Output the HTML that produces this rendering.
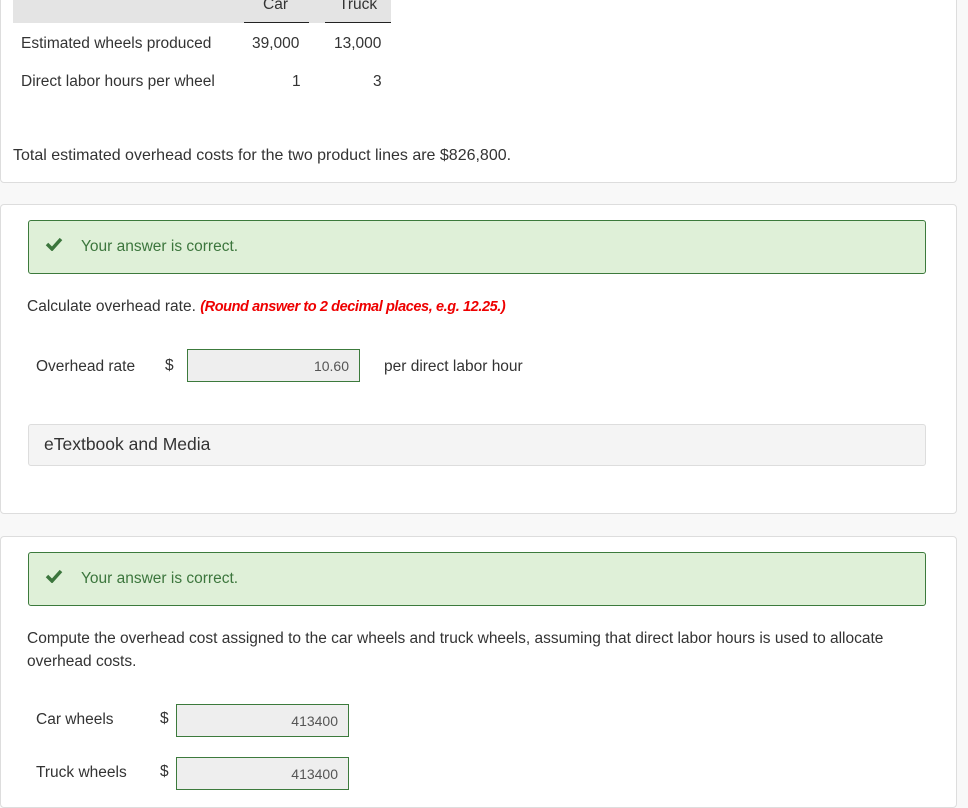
<!DOCTYPE html>
<html><head><style>
body{margin:0;width:968px;height:793px;background:#f8f8f8;position:relative;overflow:hidden;font-family:"Liberation Sans",sans-serif;color:#333;font-size:15.5px}
.a{position:absolute;white-space:nowrap}
.card{position:absolute;left:0;width:955px;background:#fff;border:1px solid #ddd;border-radius:4px}
.ok{position:absolute;left:28px;width:896px;height:52px;background:#dff0d8;border:1px solid #3c7a3c;border-radius:3px}
.ok span{position:absolute;left:52px;top:17px;color:#3c763d;font-size:15.5px}
.ok svg{position:absolute;left:16px;top:16px}
.inp{position:absolute;background:#eee;border:1px solid #3c7a3c;text-align:right;font-size:14px;color:#555;box-sizing:border-box;padding-right:10px}
</style></head><body>
<div class="card" style="top:-5px;height:186px"></div>
<div class="a" style="left:13px;top:0;width:378px;height:23px;background:#e4e4e4"></div>
<div class="a" style="left:244px;top:22px;width:65px;height:1px;background:#222"></div>
<div class="a" style="left:325px;top:22px;width:66px;height:1px;background:#222"></div>
<div class="a" style="left:263px;top:-4px">Car</div>
<div class="a" style="left:339px;top:-4px">Truck</div>
<div class="a" style="left:21px;top:35px">Estimated wheels produced</div>
<div class="a" style="left:252px;top:35px">39,000</div>
<div class="a" style="left:334px;top:35px">13,000</div>
<div class="a" style="left:21px;top:73px">Direct labor hours per wheel</div>
<div class="a" style="left:292px;top:73px">1</div>
<div class="a" style="left:373px;top:73px">3</div>
<div class="a" style="left:13px;top:147px;font-size:16px">Total estimated overhead costs for the two product lines are $826,800.</div>

<div class="card" style="top:204px;height:308px"></div>
<div class="ok" style="top:220px"><svg width="18" height="14" viewBox="0 0 18 14"><path d="M2 7l5 5L16 2" fill="none" stroke="#3c763d" stroke-width="3.5"/></svg><span>Your answer is correct.</span></div>
<div class="a" style="left:27px;top:298px">Calculate overhead rate. <b style="color:#e00;font-style:italic;font-size:14.5px;letter-spacing:-0.4px">(Round answer to 2 decimal places, e.g. 12.25.)</b></div>
<div class="a" style="left:36px;top:358px">Overhead rate</div>
<div class="a" style="left:165px;top:357px">$</div>
<div class="inp" style="top:349px;height:33px;padding-top:8px;left:187px;width:173px">10.60</div>
<div class="a" style="left:384px;top:358px">per direct labor hour</div>
<div class="a" style="left:28px;top:424px;width:896px;height:40px;background:#f4f4f4;border:1px solid #ddd;border-radius:3px"></div>
<div class="a" style="left:44px;top:434px;font-size:17.5px">eTextbook and Media</div>

<div class="card" style="top:536px;height:270px"></div>
<div class="ok" style="top:552px"><svg width="18" height="14" viewBox="0 0 18 14"><path d="M2 7l5 5L16 2" fill="none" stroke="#3c763d" stroke-width="3.5"/></svg><span>Your answer is correct.</span></div>
<div class="a" style="left:27px;top:630px">Compute the overhead cost assigned to the car wheels and truck wheels, assuming that direct labor hours is used to allocate</div>
<div class="a" style="left:27px;top:653px">overhead costs.</div>
<div class="a" style="left:36px;top:711px">Car wheels</div>
<div class="a" style="left:160px;top:710px">$</div>
<div class="inp" style="left:176px;top:704px;width:173px;height:33px;padding-top:8px">413400</div>
<div class="a" style="left:36px;top:764px">Truck wheels</div>
<div class="a" style="left:160px;top:763px">$</div>
<div class="inp" style="left:176px;top:757px;width:173px;height:33px;padding-top:8px">413400</div>
</body></html>
